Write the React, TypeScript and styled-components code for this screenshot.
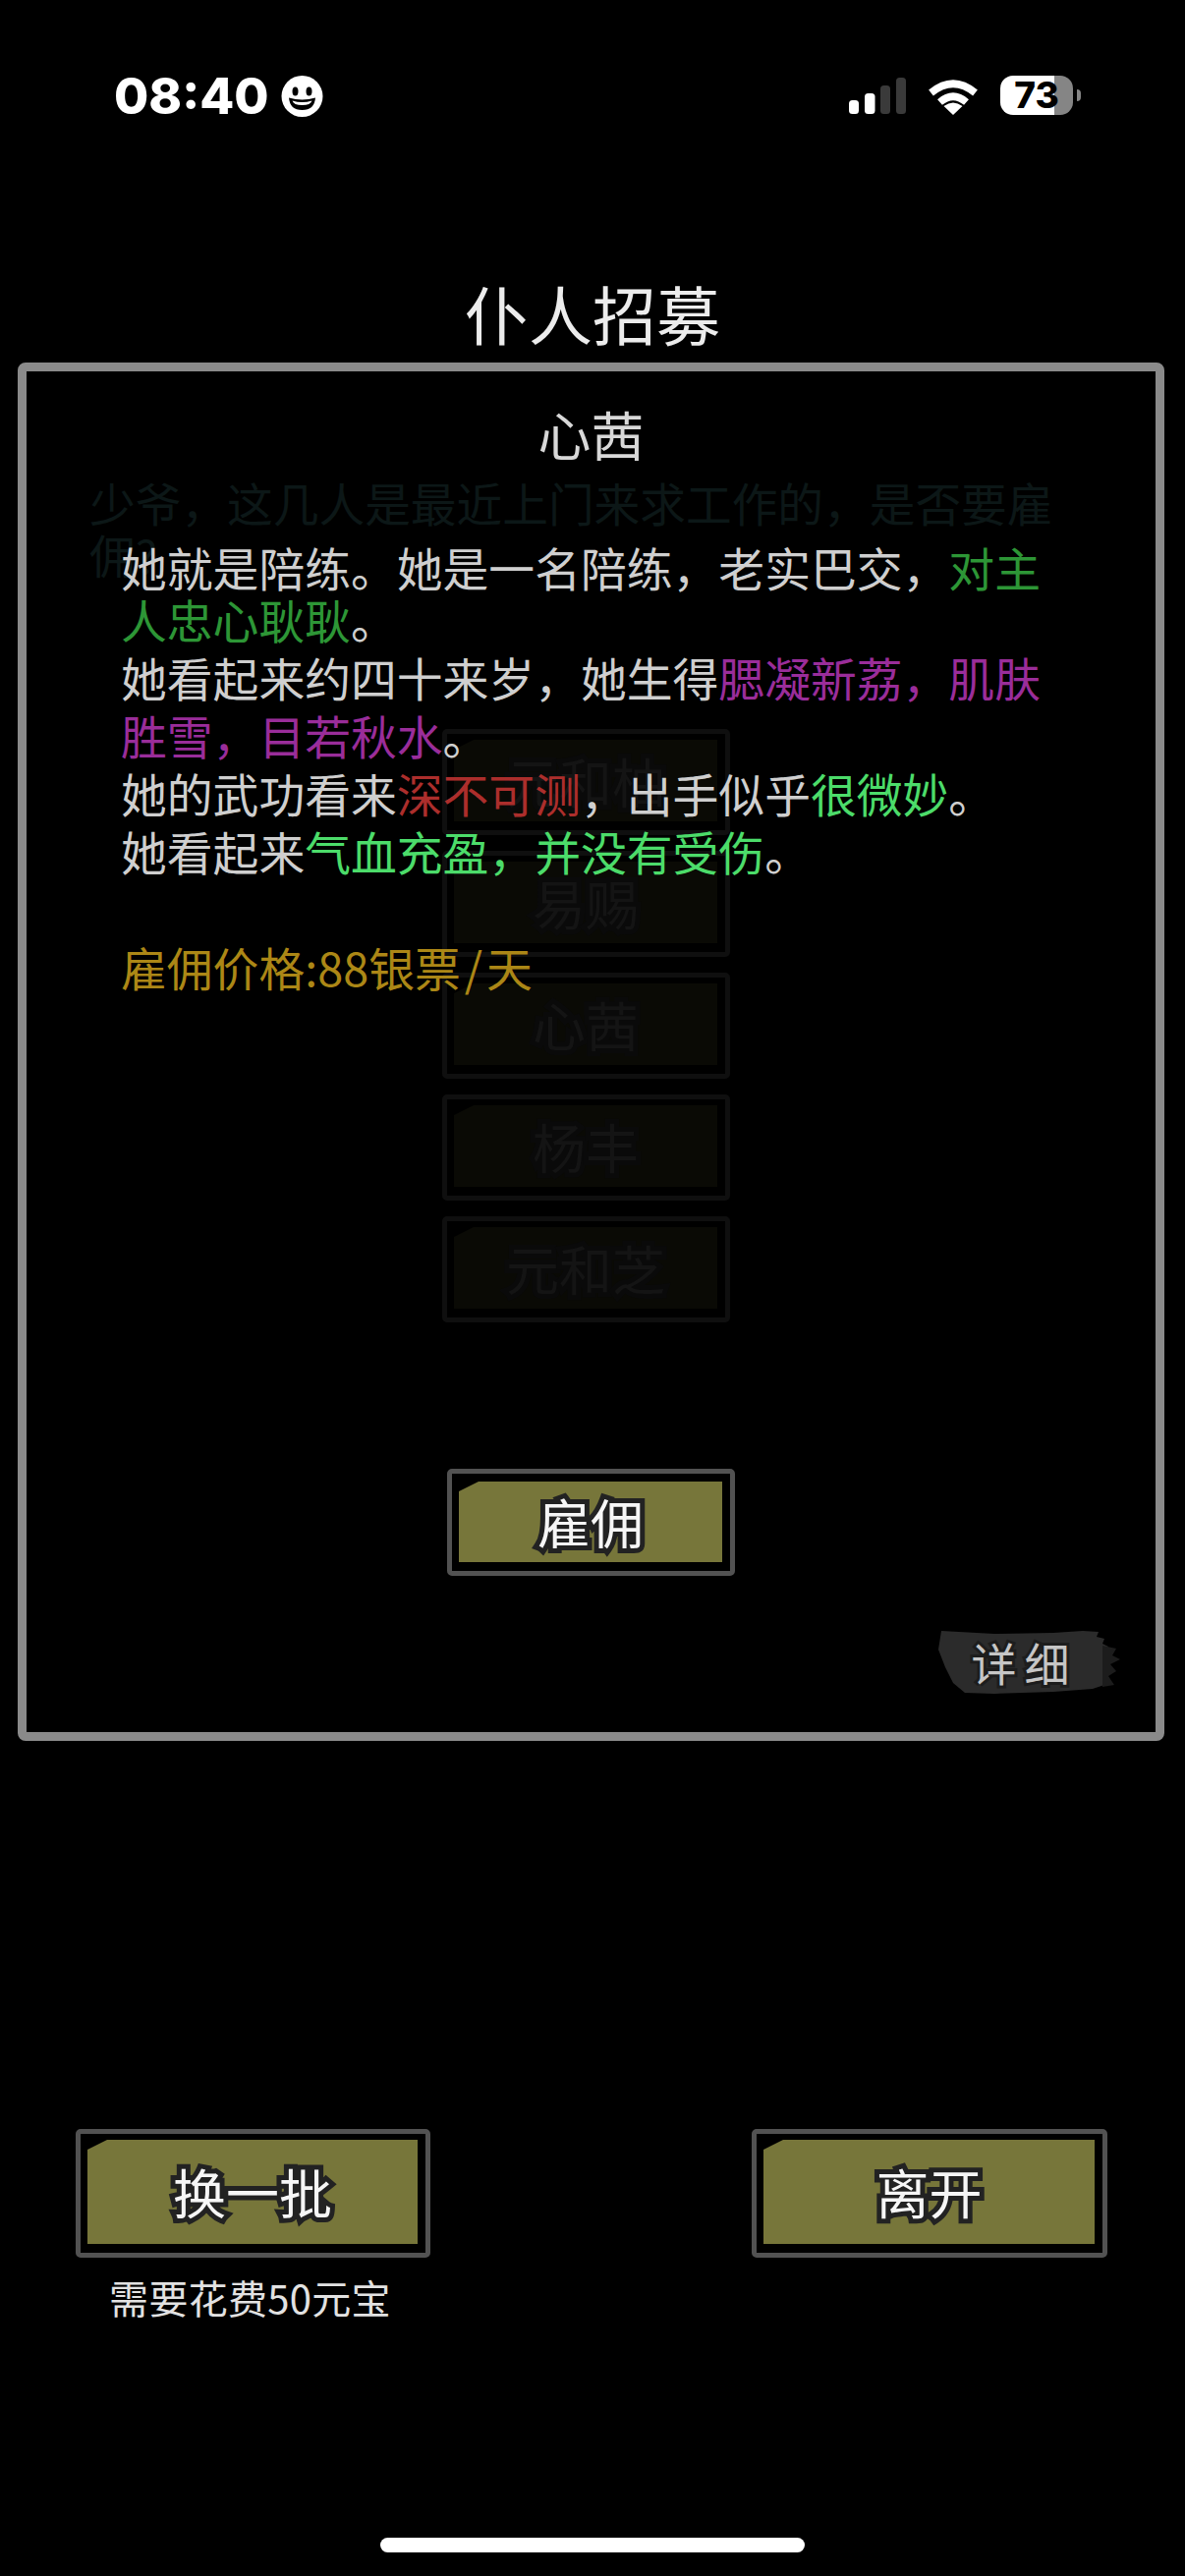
import styled, { createGlobalStyle } from "styled-components";

const GlobalStyle = createGlobalStyle`
  html, body {
    margin: 0;
    padding: 0;
    background: #000;
  }
  body {
    font-family: "Noto Sans CJK SC", "Noto Sans", sans-serif;
  }
`;

const Page = styled.div`
  width: 1206px;
  height: 2622px;
  background: #000;
  display: flex;
  flex-direction: column;
  overflow: hidden;
`;

const StatusBar = styled.div`
  display: flex;
  justify-content: space-between;
  align-items: flex-start;
  height: 42px;
  padding: 77px 114px 0 116px;
`;

const TimeGroup = styled.div`
  display: flex;
  align-items: center;
  gap: 12px;
  height: 42px;
`;

const Time = styled.span`
  font-family: Inter, "Liberation Sans", sans-serif;
  font-weight: 800;
  font-size: 51px;
  line-height: 42px;
  color: #fff;
`;

const StatusIcons = styled.div`
  display: flex;
  align-items: flex-start;
  gap: 22px;
  height: 42px;
`;

const SignalIcon = styled.svg`
  width: 58px;
  height: 37px;
  margin-top: 2px;
`;

const WifiIcon = styled.svg`
  width: 52px;
  height: 36px;
  margin-top: 4px;
`;

const Battery = styled.div`
  position: relative;
  width: 74px;
  height: 40px;
  border-radius: 13px;
  background: linear-gradient(90deg, #fff 0 74%, #858585 74%);
  color: #000;
  display: flex;
  align-items: center;
  justify-content: center;
  font-family: Inter, "Liberation Sans", sans-serif;
  font-weight: 800;
  font-size: 37px;
  line-height: 40px;

  &::after {
    content: "";
    position: absolute;
    left: 78px;
    top: 14px;
    width: 4px;
    height: 12px;
    border-radius: 0 6px 6px 0;
    background: #858585;
  }
`;

const Title = styled.h1`
  margin: 159px 0 0;
  font-size: 65px;
  font-weight: 400;
  line-height: 80px;
  text-align: center;
  color: #ececec;
`;

const Panel = styled.div`
  position: relative;
  box-sizing: border-box;
  width: 1167px;
  height: 1403px;
  margin: 11px 0 0 18px;
  border: 9px solid #8a8a8a;
  border-radius: 8px;
`;

const Backdrop = styled.div`
  display: flex;
  flex-direction: column;
  align-items: flex-start;
  padding: 106px 0 0 64px;
`;

const Hint = styled.p`
  width: 990px;
  margin: 0;
  font-size: 46.7px;
  line-height: 53px;
  color: #0c1717;
`;

const Roster = styled.div`
  display: flex;
  flex-direction: column;
  gap: 16px;
  margin: 152px 0 0 359px;
`;

const Frame = styled.div<{ $width: number; $height: number; $dim?: boolean; $padTop: number }>`
  box-sizing: border-box;
  width: ${(p) => p.$width}px;
  height: ${(p) => p.$height}px;
  padding: ${(p) => p.$padTop}px 8px 9px 7px;
  border: 5px solid ${(p) => (p.$dim ? "#0f0f0f" : "#525252")};
  border-radius: 5px;
`;

const Plate = styled.div<{ $dim?: boolean }>`
  height: 100%;
  display: flex;
  align-items: center;
  justify-content: center;
  background: ${(p) => (p.$dim ? "#0a0a05" : "#77763a")};
  clip-path: polygon(20px 0, 100% 0, 100% 100%, 0 100%, 0 10px);
`;

const Label = styled.span<{ $dim?: boolean }>`
  font-size: 54px;
  line-height: 60px;
  color: ${(p) => (p.$dim ? "#141414" : "#f6f6f6")};
  -webkit-text-stroke: 10px ${(p) => (p.$dim ? "#0a0a0a" : "#222")};
  paint-order: stroke fill;
`;

const Dialog = styled.div`
  position: absolute;
  inset: 0;
  display: flex;
  flex-direction: column;
`;

const Name = styled.div`
  margin-top: 34px;
  font-size: 54px;
  line-height: 60px;
  text-align: center;
  color: #d8d8d8;
`;

const Story = styled.div`
  width: 950px;
  margin: 78px 0 0 96px;
  font-size: 46.8px;
  color: #cfcfcf;
`;

const Para = styled.p<{ $tight?: boolean }>`
  margin: 0 0 ${(p) => (p.$tight ? "3px" : "0")};
  line-height: ${(p) => (p.$tight ? "53px" : "59px")};
`;

const tones = {
  loyal: "#2d9636",
  beauty: "#9a2d9a",
  danger: "#ac2e2c",
  good: "#4cdc6a",
  price: "#ac8716",
};

const Tone = styled.span<{ $tone: keyof typeof tones }>`
  color: ${(p) => tones[p.$tone]};
`;

const Price = styled.p`
  margin: 59px 0 0;
  line-height: 59px;
  color: ${tones.price};
`;

const Slash = styled.span`
  padding: 0 4px;
`;

const HireRow = styled.div`
  align-self: center;
  margin-top: 482px;
`;

const DetailButton = styled.div`
  position: relative;
  align-self: flex-end;
  width: 188px;
  height: 67px;
  margin: 53px 36px 0 0;
  display: flex;
  align-items: center;
  justify-content: center;
  padding-right: 15px;
  box-sizing: border-box;
`;

const BrushStroke = styled.svg`
  position: absolute;
  inset: 0;
  width: 100%;
  height: 100%;
`;

const DetailLabel = styled.span`
  position: relative;
  font-size: 46px;
  line-height: 52px;
  letter-spacing: 8px;
  margin-right: -8px;
  color: #c6c6c6;
  -webkit-text-stroke: 6px #1d1d1d;
  paint-order: stroke fill;
`;

const BottomBar = styled.div`
  display: flex;
  justify-content: space-between;
  align-items: flex-start;
  margin-top: 395px;
  padding: 0 79px 0 77px;
`;

const RefreshColumn = styled.div`
  display: flex;
  flex-direction: column;
  align-items: center;
`;

const Cost = styled.div`
  margin-top: 16px;
  padding-right: 6px;
  font-size: 40px;
  line-height: 48px;
  letter-spacing: 0.3px;
  color: #e2e2e2;
`;

const HomeIndicator = styled.div`
  align-self: center;
  width: 432px;
  height: 15px;
  margin: auto 0 24px;
  border-radius: 8px;
  background: #fff;
`;

const roster = ["元和柚", "易赐", "心茜", "杨丰", "元和芝"];

const App = () => {
  return (
    <Page>
      <GlobalStyle />
      <StatusBar>
        <TimeGroup>
          <Time>08:40</Time>
          <svg width="43" height="42" viewBox="0 0 43 42">
            <circle cx="21.5" cy="21" r="21" fill="#fff" />
            <ellipse cx="14.5" cy="16" rx="3" ry="4.6" fill="#000" />
            <ellipse cx="28.5" cy="16" rx="3" ry="4.6" fill="#000" />
            <path d="M8 22.5Q21.5 26.5 35 22.5Q34 35 21.5 35Q9 35 8 22.5Z" fill="#000" />
            <path d="M11.5 25.5Q21.5 28.5 31.5 25.5Q30 30 21.5 30Q13 30 11.5 25.5Z" fill="#fff" />
          </svg>
        </TimeGroup>
        <StatusIcons>
          <SignalIcon viewBox="0 0 58 37">
            <rect x="0" y="23" width="10" height="14" rx="3.5" fill="#fff" />
            <rect x="16" y="16" width="10.5" height="21" rx="3.5" fill="#fff" />
            <rect x="32" y="8" width="10" height="29" rx="3.5" fill="#3a3a3a" />
            <rect x="48" y="0" width="10" height="37" rx="3.5" fill="#3a3a3a" />
          </SignalIcon>
          <WifiIcon viewBox="0 0 52 36">
            <path d="M3.5 13.5Q26 -5 48.5 13.5" fill="none" stroke="#fff" strokeWidth="7.5" />
            <path d="M12.5 23Q26 11.5 39.5 23" fill="none" stroke="#fff" strokeWidth="7.5" />
            <path d="M26 36L16.500 27Q26 20 35.500 27Z" fill="#fff" />
          </WifiIcon>
          <Battery>73</Battery>
        </StatusIcons>
      </StatusBar>

      <Title>仆人招募</Title>

      <Panel>
        <Backdrop>
          <Hint>少爷，这几人是最近上门来求工作的，是否要雇佣?</Hint>
          <Roster>
            {roster.map((name) => (
              <Frame key={name} $width={293} $height={108} $padTop={6} $dim>
                <Plate $dim>
                  <Label $dim>{name}</Label>
                </Plate>
              </Frame>
            ))}
          </Roster>
        </Backdrop>

        <Dialog>
          <Name>心茜</Name>
          <Story>
            <Para $tight>
              她就是陪练。她是一名陪练，老实巴交，<Tone $tone="loyal">对主人忠心耿耿</Tone>。
            </Para>
            <Para>
              她看起来约四十来岁，她生得<Tone $tone="beauty">腮凝新荔，肌肤胜雪，目若秋水</Tone>。
            </Para>
            <Para>
              她的武功看来<Tone $tone="danger">深不可测</Tone>，出手似乎<Tone $tone="good">很微妙</Tone>。
            </Para>
            <Para>
              她看起来<Tone $tone="good">气血充盈，并没有受伤</Tone>。
            </Para>
            <Price>
              雇佣价格:88银票<Slash>/</Slash>天
            </Price>
          </Story>
          <HireRow>
            <Frame $width={293} $height={109} $padTop={8}>
              <Plate>
                <Label>雇佣</Label>
              </Plate>
            </Frame>
          </HireRow>
          <DetailButton>
            <BrushStroke viewBox="0 0 188 67">
              <path
                d="M6 3L60 6L120 5L150 3L166 4L164 9L172 11L170 16L176 19L173 26L178 33L173 40L176 47L170 52L172 58L160 62L120 65L60 67L30 66L18 56L10 40L3 22Z"
                fill="#2b2b2b"
              />
              <path
                d="M170 18L184 21L180 28L188 32L178 37L184 44L176 49L182 58L170 60Z"
                fill="#1c1c1c"
              />
            </BrushStroke>
            <DetailLabel>详细</DetailLabel>
          </DetailButton>
        </Dialog>
      </Panel>

      <BottomBar>
        <RefreshColumn>
          <Frame $width={361} $height={131} $padTop={6}>
            <Plate>
              <Label>换一批</Label>
            </Plate>
          </Frame>
          <Cost>需要花费50元宝</Cost>
        </RefreshColumn>
        <Frame $width={362} $height={131} $padTop={6}>
          <Plate>
            <Label>离开</Label>
          </Plate>
        </Frame>
      </BottomBar>

      <HomeIndicator />
    </Page>
  );
};

export default App;
